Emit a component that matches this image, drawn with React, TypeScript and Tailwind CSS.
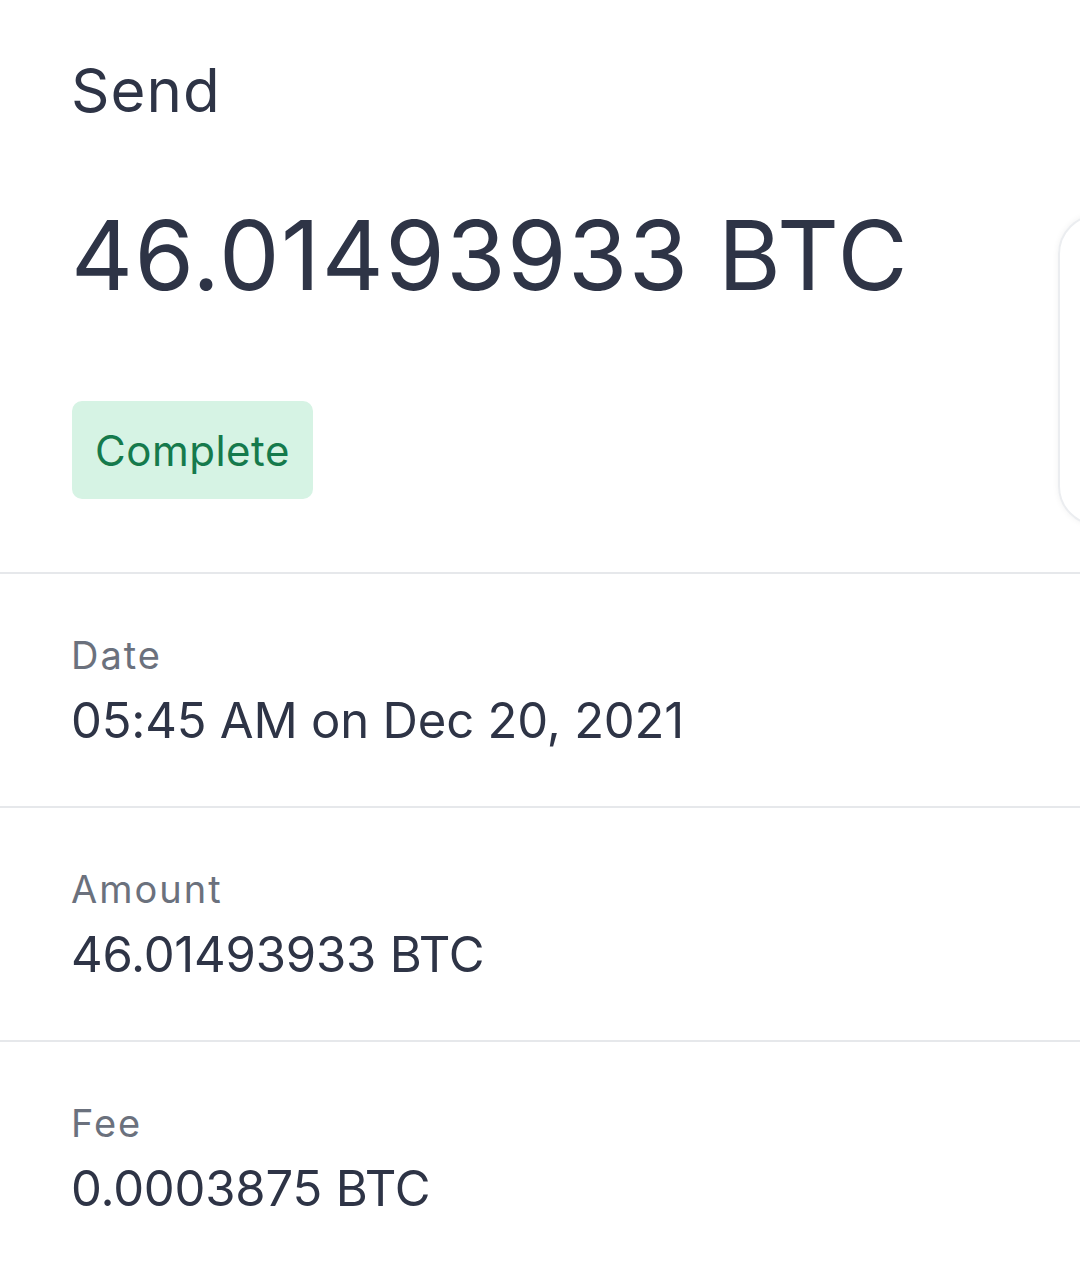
import React from "react";

const Row = ({ label, value }: { label: string; value: string }) => (
  <div className="border-t-2 border-[#e6e8eb] pl-[71px] pt-[56px] h-[234px]">
    <div className="text-[38px] leading-[50px] tracking-[2px] text-[#6b717d]">{label}</div>
    <div className="mt-[11px] text-[49px] leading-[60px] tracking-[-0.2px] text-[#2e3446]">{value}</div>
  </div>
);

export default function App() {
  return (
    <div
      className="relative w-[1080px] h-[1268px] bg-white overflow-hidden"
      style={{ fontFamily: "Inter, 'Noto Sans', sans-serif" }}
    >
      <div className="absolute left-[1058px] top-[214px] w-[120px] h-[312px] rounded-[40px] border-2 border-[#ebedf0] shadow-[0_0_6px_rgba(0,0,0,0.06)]" />
      <div className="pl-[71px] pt-[54px]">
        <div className="text-[60px] leading-[72px] tracking-[1px] text-[#2e3446]">Send</div>
        <div className="mt-[74px] text-[96px] leading-[110px] tracking-[1.5px] text-[#2e3446]">46.01493933 BTC</div>
        <div className="mt-[91px] ml-[1px] flex items-center justify-center w-[241px] h-[98px] rounded-[10px] bg-[#d6f3e4] text-[42px] tracking-[0.5px] text-[#157a4c]">
          Complete
        </div>
      </div>
      <div className="mt-[73px]">
        <Row label="Date" value="05:45 AM on Dec 20, 2021" />
        <Row label="Amount" value="46.01493933 BTC" />
        <Row label="Fee" value="0.0003875 BTC" />
      </div>
    </div>
  );
}
